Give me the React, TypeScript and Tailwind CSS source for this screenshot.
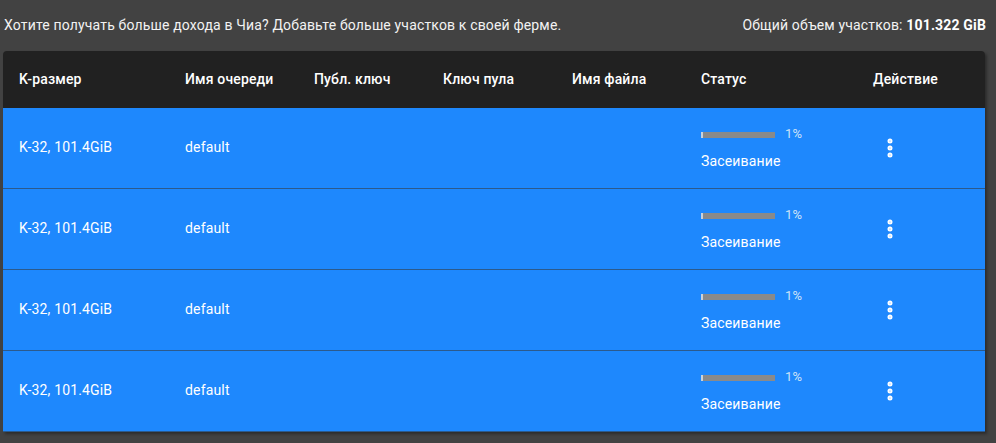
import { MoreVertical } from 'lucide-react';

const rows = [1, 2, 3, 4];

export default function App() {
  return (
    <div className="w-[996px] h-[443px] bg-[#424242] text-white overflow-hidden tracking-[0.01em]" style={{ fontFamily: 'Roboto, "Noto Sans", sans-serif' }}>
      <div className="flex items-center justify-between pl-[4px] pr-[10px] h-[51px] text-[14px] text-[#f2f2f2]">
        <span>Хотите получать больше дохода в Чиа? Добавьте больше участков к своей ферме.</span>
        <span>
          Общий объем участков: <span className="font-bold text-white">101.322 GiB</span>
        </span>
      </div>

      <div className="ml-[3px] w-[982px] rounded-t-[4px] overflow-hidden shadow-[2px_2px_3px_rgba(0,0,0,0.35)]">
        <div className="flex items-center h-[57px] bg-[#212121] text-[14px] font-medium text-white">
          <div className="w-[182px] pl-[16px]">K-размер</div>
          <div className="w-[129px]">Имя очереди</div>
          <div className="w-[129px]">Публ. ключ</div>
          <div className="w-[129px]">Ключ пула</div>
          <div className="w-[129px]">Имя файла</div>
          <div className="w-[172px]">Статус</div>
          <div className="flex-1">Действие</div>
        </div>

        {rows.map((r) => (
          <div key={r} className="flex items-center h-[81px] bg-[#1e88fd] border-b border-[#2c5a8c] text-[14px] text-white">
            <div className="w-[182px] pl-[16px] -mt-[2px]">K-32, 101.4GiB</div>
            <div className="w-[129px] -mt-[2px]">default</div>
            <div className="w-[129px]"></div>
            <div className="w-[129px]"></div>
            <div className="w-[129px]"></div>
            <div className="w-[172px] flex flex-col gap-[8px] mt-[3px]">
              <div className="flex items-center gap-[10px]">
                <div className="w-[74px] h-[9px] flex items-center">
                  <div className="w-full h-[6px] bg-[#8a8a8a] border-l-2 border-[#c9d3dd]"></div>
                </div>
                <span className="text-[13px] text-[#cfe3f7] -mt-[3px]">1%</span>
              </div>
              <span>Засеивание</span>
            </div>
            <div className="flex-1 pl-[5px]">
              <MoreVertical className="w-[24px] h-[24px]" strokeWidth={3} />
            </div>
          </div>
        ))}
      </div>
    </div>
  );
}
